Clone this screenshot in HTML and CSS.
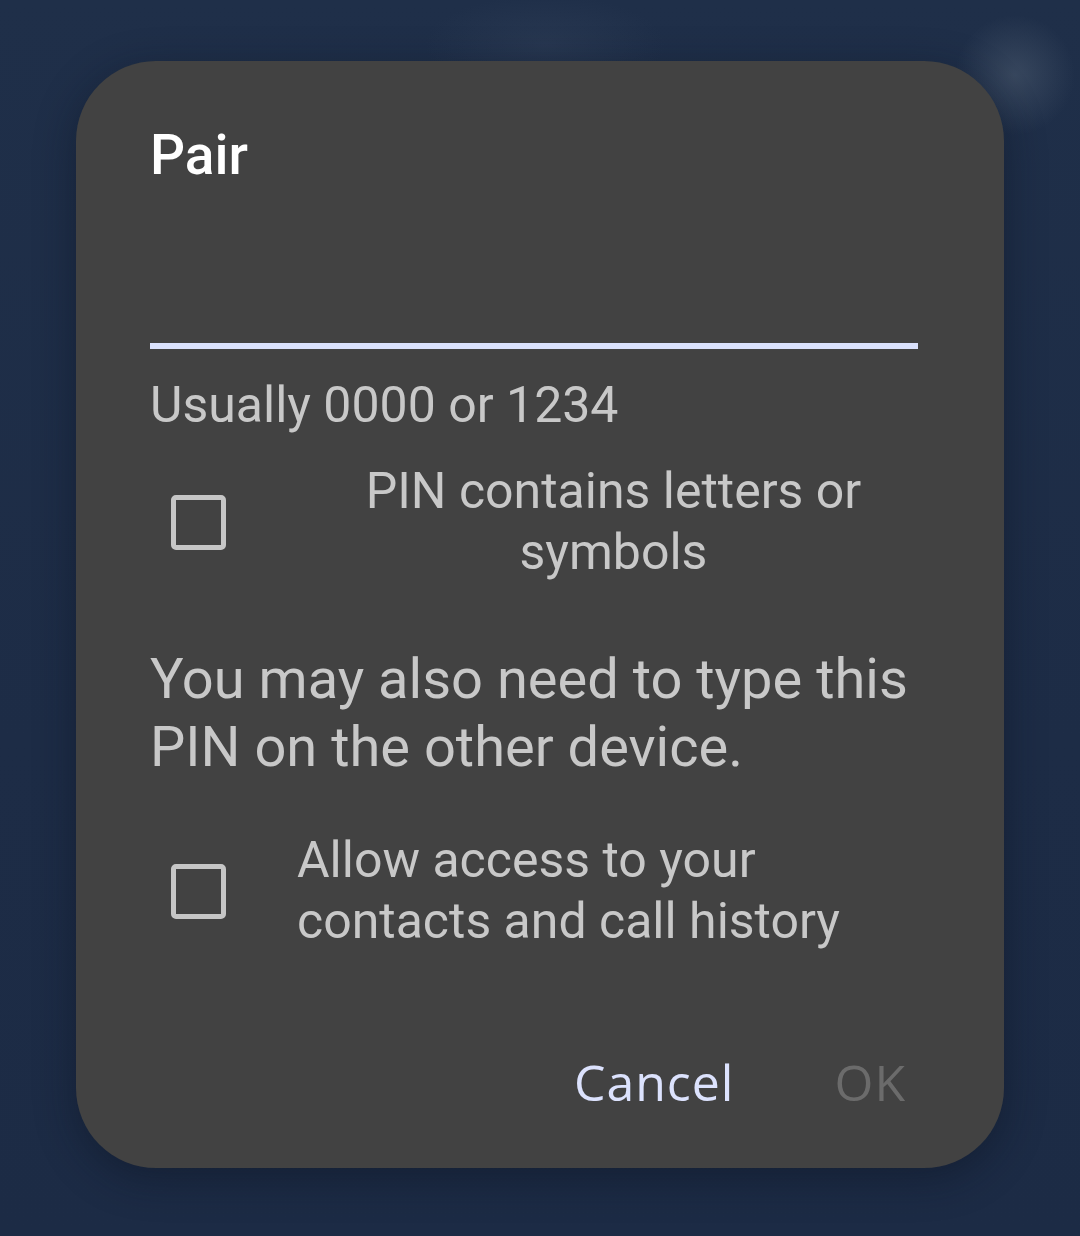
FILE: index.html
```html
<!DOCTYPE html>
<html lang="en">
<head>
    <meta charset="UTF-8">
    <meta name="viewport" content="width=device-width, initial-scale=1.0">
    <title>Pair</title>
    <link rel="stylesheet" href="styles.css">
</head>
<body>
    <div class="dialog">
        <h1 class="dialog-title">Pair</h1>

        <div class="pin-field"></div>
        <p class="helper">Usually 0000 or 1234</p>

        <div class="check-row">
            <div class="check-box"><span class="box"></span></div>
            <div class="check-label centered">PIN contains letters or symbols</div>
        </div>

        <p class="note">You may also need to type this PIN on the other device.</p>

        <div class="check-row second">
            <div class="check-box"><span class="box"></span></div>
            <div class="check-label">Allow access to your contacts and call history</div>
        </div>

        <div class="actions">
            <button class="btn-cancel">Cancel</button>
            <button class="btn-ok" disabled>OK</button>
        </div>
    </div>
</body>
</html>
```

FILE: styles.css
```css
body {
    margin: 0;
    padding: 61px 0 0 76px;
    height: 1236px;
    box-sizing: border-box;
    font-family: Roboto, "Noto Sans", sans-serif;
    background-color: #1e2e48;
    background-image:
        radial-gradient(circle at 1015px 75px, rgba(80, 95, 115, 0.5) 0, rgba(80, 95, 115, 0) 60px),
        radial-gradient(ellipse 120px 50px at 545px 45px, rgba(60, 75, 100, 0.3), rgba(60, 75, 100, 0)),
        linear-gradient(180deg, #1f2f49 0%, #1d2c46 60%, #1c2b45 100%);
    overflow: hidden;
}

.dialog {
    width: 928px;
    height: 1107px;
    box-sizing: border-box;
    padding: 62px 74px 0 74px;
    background: #424242;
    border-radius: 80px;
    box-shadow: 0 10px 40px rgba(10, 18, 32, 0.45);
}

.dialog-title {
    margin: 0;
    font-size: 55px;
    line-height: 64px;
    font-weight: 500;
    color: #ffffff;
}

.pin-field {
    height: 156px;
    margin-right: 12px;
    border-bottom: 6px solid #dae1fc;
}

.helper {
    margin: 26px 0 0;
    font-size: 50px;
    line-height: 61px;
    color: #c8c8c8;
}

.check-row {
    display: flex;
    align-items: center;
    margin-top: 25px;
}

.check-row.second {
    margin-top: 49px;
}

.check-box {
    width: 147px;
    flex: none;
}

.check-box .box {
    display: block;
    width: 55px;
    height: 55px;
    margin-left: 21px;
    box-sizing: border-box;
    border: 5px solid #c6c6c6;
    border-radius: 5px;
}

.check-label {
    flex: 1;
    font-size: 50px;
    line-height: 61px;
    color: #c8c8c8;
}

.check-label.centered {
    text-align: center;
}

.note {
    margin: 62px 0 0;
    font-size: 56px;
    line-height: 68px;
    color: #c8c8c8;
}

.actions {
    display: flex;
    justify-content: flex-end;
    gap: 100px;
    margin-top: 100px;
    padding-right: 24px;
}

.actions button {
    padding: 0;
    border: none;
    background: none;
    font-family: "Open Sans", Roboto, sans-serif;
    font-size: 50px;
    line-height: 61px;
    font-weight: 500;
    letter-spacing: 1px;
    cursor: pointer;
}

.btn-cancel {
    color: #dce2fd;
}

.btn-ok {
    color: #6b6b6b;
}
```
